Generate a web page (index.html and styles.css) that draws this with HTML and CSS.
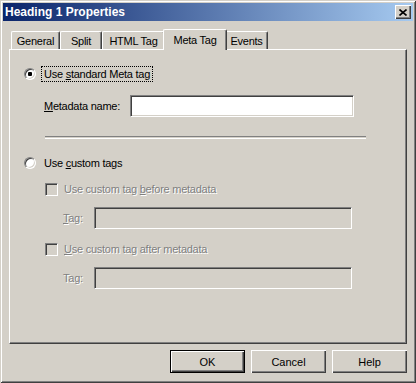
FILE: index.html
```html
<!DOCTYPE html>
<html lang="en">
<head>
    <meta charset="UTF-8">
    <title>Heading 1 Properties</title>
    <link rel="stylesheet" href="styles.css">
</head>
<body>
    <div class="window">
        <div class="titlebar">
            <span class="title">Heading 1 Properties</span>
            <span class="close">
                <svg width="8" height="7" viewBox="0 0 8 7"><path d="M0.5 0.5 L7.5 6.5 M7.5 0.5 L0.5 6.5" stroke="#000" stroke-width="1.6"/></svg>
            </span>
        </div>

        <div class="dialog">
            <div class="tabs">
                <div class="tab w-general">General</div>
                <div class="tab w-split">Split</div>
                <div class="tab w-html">HTML Tag</div>
                <div class="tab active w-meta">Meta Tag</div>
                <div class="tab w-events">Events</div>
            </div>

            <div class="panel">
                <div class="row row-radio">
                    <span class="radio on"></span>
                    <span class="label focus">Use <u>s</u>tandard Meta tag</span>
                </div>

                <div class="row row-field meta-row">
                    <span class="field-label"><u>M</u>etadata name:</span>
                    <span class="input meta-input"></span>
                </div>

                <div class="separator"></div>

                <div class="row row-radio radio2">
                    <span class="radio"></span>
                    <span class="label">Use <u>c</u>ustom tags</span>
                </div>

                <div class="row row-check check1">
                    <span class="checkbox"></span>
                    <span class="label disabled">Use custom tag <u>b</u>efore metadata</span>
                </div>

                <div class="row row-field tag-row">
                    <span class="field-label disabled"><u>T</u>ag:</span>
                    <span class="input disabled-input"></span>
                </div>

                <div class="row row-check check2">
                    <span class="checkbox"></span>
                    <span class="label disabled"><u>U</u>se custom tag after metadata</span>
                </div>

                <div class="row row-field tag-row">
                    <span class="field-label disabled">Ta<u>g</u>:</span>
                    <span class="input disabled-input"></span>
                </div>
            </div>

            <div class="buttons">
                <button class="btn default">OK</button>
                <button class="btn">Cancel</button>
                <button class="btn">Help</button>
            </div>
        </div>
    </div>
</body>
</html>
```

FILE: styles.css
```css
body {
    margin: 0;
    font-family: "Liberation Sans", Arial, sans-serif;
    font-size: 11px;
    letter-spacing: -0.25px;
    color: #000;
    background: #d4d0c8;
}
.window {
    width: 416px;
    height: 383px;
    box-sizing: border-box;
    padding: 3px;
    background: #d4d0c8;
    box-shadow: inset 1px 1px #d4d0c8, inset -1px -1px #404040,
                inset 2px 2px #fff, inset -2px -2px #808080;
}
.titlebar {
    height: 18px;
    display: flex;
    align-items: center;
    justify-content: space-between;
    padding: 0 2px 0 2px;
    background: linear-gradient(to right, #0a246a, #a6caf0);
}
.title {
    color: #fff;
    font-weight: bold;
    font-size: 12px;
    letter-spacing: 0;
}
.close {
    width: 16px;
    height: 14px;
    box-sizing: border-box;
    background: #d4d0c8;
    display: flex;
    align-items: center;
    justify-content: center;
    box-shadow: inset 1px 1px #fff, inset -1px -1px #404040, inset -2px -2px #808080;
}
.dialog {
    padding: 8px 6px 0 6px;
}
.tabs {
    display: flex;
    height: 20px;
    padding-left: 2px;
    align-items: flex-end;
}
.tab {
    height: 18px;
    box-sizing: border-box;
    border-left: 1px solid #fff;
    border-top: 1px solid #fff;
    border-right: 1px solid #404040;
    border-radius: 2px 2px 0 0;
    box-shadow: inset -1px 0 #808080;
    display: flex;
    align-items: center;
    justify-content: center;
    padding-top: 1px;
}
.tab.active {
    height: 21px;
    margin: 0 -2px -1px -2px;
    position: relative;
    z-index: 1;
    background: #d4d0c8;
    padding-bottom: 2px;
}
.w-general { width: 49px; }
.w-split { width: 42px; }
.w-html { width: 63px; }
.w-meta { width: 64px; }
.w-events { width: 43px; }

.panel {
    height: 295px;
    box-sizing: border-box;
    border-top: 1px solid #fff;
    border-left: 1px solid #fff;
    border-right: 1px solid #404040;
    border-bottom: 1px solid #404040;
    box-shadow: inset -1px -1px #808080;
    padding: 16px 0 0 14px;
    display: flex;
    flex-direction: column;
}
.row {
    display: flex;
    align-items: center;
}
.row-radio {
    height: 16px;
}
.row-check {
    height: 16px;
    margin-left: 21px;
}
.row-field {
    height: 22px;
}
.meta-row {
    margin-top: 13px;
    margin-left: 20px;
}
.radio2 {
    margin-top: 16px;
}
.check1 {
    margin-top: 10px;
}
.check2 {
    margin-top: 12px;
}
.tag-row {
    margin-top: 10px;
    margin-left: 39px;
}
.radio {
    width: 12px;
    height: 12px;
    box-sizing: border-box;
    border-radius: 50%;
    border: 1px solid;
    border-color: #808080 #fff #fff #808080;
    background: #fff;
    box-shadow: inset 1px 1px #404040, inset -1px -1px #d4d0c8;
    display: flex;
    align-items: center;
    justify-content: center;
}
.radio.on::after {
    content: "";
    width: 4px;
    height: 4px;
    border-radius: 1px;
    background: #000;
}
.checkbox {
    width: 13px;
    height: 13px;
    box-sizing: border-box;
    border: 1px solid;
    border-color: #808080 #fff #fff #808080;
    background: #d4d0c8;
    box-shadow: inset 1px 1px #404040, inset -1px -1px #d4d0c8;
}
.label {
    margin-left: 5px;
    padding: 1px 2px 1px 2px;
    border: 1px dotted transparent;
}
.row-check .label {
    margin-left: 3px;
}
.label.focus {
    border-color: #000;
}
.disabled {
    color: #808080;
    text-shadow: 1px 1px #fff;
}
.field-label {
    width: 86px;
}
.tag-row .field-label {
    width: 31px;
}
.input {
    height: 22px;
    box-sizing: border-box;
    border: 1px solid;
    border-color: #808080 #fff #fff #808080;
    box-shadow: inset 1px 1px #404040, inset -1px -1px #d4d0c8;
    background: #fff;
}
.meta-input {
    width: 224px;
}
.disabled-input {
    width: 258px;
    background: #d4d0c8;
}
.separator {
    margin: 19px 0 0 21px;
    width: 321px;
    height: 1px;
    border-top: 1px solid #808080;
    border-bottom: 1px solid #fff;
}
.buttons {
    display: flex;
    justify-content: flex-end;
    gap: 6px;
    margin-top: 6px;
}
.btn {
    width: 75px;
    height: 23px;
    font-family: "Liberation Sans", Arial, sans-serif;
    font-size: 11px;
    color: #000;
    background: #d4d0c8;
    border: none;
    padding: 0;
    box-shadow: inset 1px 1px #fff, inset -1px -1px #404040, inset -2px -2px #808080;
}
.btn.default {
    border: 1px solid #000;
}
```
